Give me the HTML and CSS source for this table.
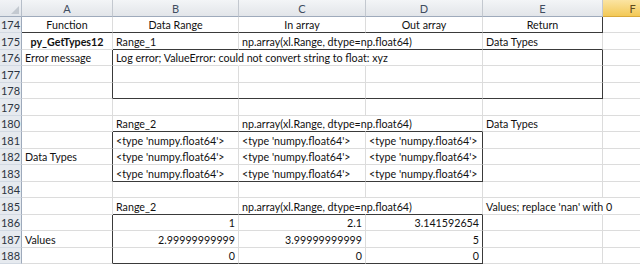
FILE: index.html
```html
<!DOCTYPE html>
<html>
<head>
<meta charset="utf-8">
<link rel="stylesheet" href="styles.css">
</head>
<body>
<div class="sheet">
  <div class="corner"></div>
  <div class="hd">A</div><div class="hd">B</div><div class="hd">C</div><div class="hd">D</div><div class="hd">E</div><div class="hd sel">F</div>

  <div class="rn">174</div>
  <div class="c ctr bb">Function</div><div class="c ctr bb">Data Range</div><div class="c ctr bb">In array</div><div class="c ctr bb">Out array</div><div class="c ctr bb br">Return</div><div class="c"></div>

  <div class="rn">175</div>
  <div class="c ctr b">py_GetTypes12</div><div class="c bb">Range_1</div><div class="c bb nr">np.array(xl.Range, dtype=np.float64)</div><div class="c bb"></div><div class="c bb">Data Types</div><div class="c"></div>

  <div class="rn">176</div>
  <div class="c br">Error message</div><div class="c nr">Log error; ValueError: could not convert string to float: xyz</div><div class="c nr"></div><div class="c"></div><div class="c br"></div><div class="c"></div>

  <div class="rn">177</div>
  <div class="c br"></div><div class="c"></div><div class="c"></div><div class="c"></div><div class="c br"></div><div class="c"></div>

  <div class="rn">178</div>
  <div class="c br"></div><div class="c bb"></div><div class="c bb"></div><div class="c bb"></div><div class="c bb br"></div><div class="c"></div>

  <div class="rn">179</div>
  <div class="c"></div><div class="c"></div><div class="c"></div><div class="c"></div><div class="c"></div><div class="c"></div>

  <div class="rn">180</div>
  <div class="c"></div><div class="c bb">Range_2</div><div class="c bb nr">np.array(xl.Range, dtype=np.float64)</div><div class="c bb"></div><div class="c">Data Types</div><div class="c"></div>

  <div class="rn">181</div>
  <div class="c br"></div><div class="c">&lt;type 'numpy.float64'&gt;</div><div class="c">&lt;type 'numpy.float64'&gt;</div><div class="c br">&lt;type 'numpy.float64'&gt;</div><div class="c"></div><div class="c"></div>

  <div class="rn">182</div>
  <div class="c br">Data Types</div><div class="c">&lt;type 'numpy.float64'&gt;</div><div class="c">&lt;type 'numpy.float64'&gt;</div><div class="c br">&lt;type 'numpy.float64'&gt;</div><div class="c"></div><div class="c"></div>

  <div class="rn">183</div>
  <div class="c br"></div><div class="c bb">&lt;type 'numpy.float64'&gt;</div><div class="c bb">&lt;type 'numpy.float64'&gt;</div><div class="c bb br">&lt;type 'numpy.float64'&gt;</div><div class="c"></div><div class="c"></div>

  <div class="rn">184</div>
  <div class="c"></div><div class="c"></div><div class="c"></div><div class="c"></div><div class="c"></div><div class="c"></div>

  <div class="rn">185</div>
  <div class="c"></div><div class="c bb">Range_2</div><div class="c bb nr">np.array(xl.Range, dtype=np.float64)</div><div class="c bb"></div><div class="c nr">Values; replace 'nan' with 0</div><div class="c"></div>

  <div class="rn">186</div>
  <div class="c br"></div><div class="c r">1</div><div class="c r">2.1</div><div class="c r br">3.141592654</div><div class="c"></div><div class="c"></div>

  <div class="rn">187</div>
  <div class="c br">Values</div><div class="c r">2.99999999999</div><div class="c r">3.99999999999</div><div class="c r br">5</div><div class="c"></div><div class="c"></div>

  <div class="rn">188</div>
  <div class="c br"></div><div class="c r bb">0</div><div class="c r bb">0</div><div class="c r bb br">0</div><div class="c"></div><div class="c"></div>
</div>
</body>
</html>
```
FILE: styles.css
```css
html, body {
  margin: 0;
  padding: 0;
  background: #ffffff;
}
body {
  width: 640px;
  height: 265px;
  overflow: hidden;
}
.sheet {
  display: grid;
  grid-template-columns: 22px 91px 126px 127px 117px 120px 60px;
  grid-template-rows: 17px 16px 17px 16px 17px 16px 17px 16px 17px 16px 17px 16px 17px 16px 17px 16px;
  font-family: "Lato", "Liberation Sans", sans-serif;
  font-size: 10.7px;
  color: #111;
}
.corner {
  position: relative;
  background: linear-gradient(#f1f3f6, #e1e5ea);
  border-right: 1px solid #b6bec9;
  border-bottom: 1px solid #9eaabb;
  box-sizing: border-box;
}
.corner::after {
  content: "";
  position: absolute;
  right: 2px;
  bottom: 2px;
  width: 0;
  height: 0;
  border-left: 8px solid transparent;
  border-bottom: 8px solid #c3c9d0;
}
.hd {
  display: flex;
  align-items: center;
  justify-content: center;
  background: linear-gradient(#f3f5f7, #e2e5e9);
  border-right: 1px solid #c3c8cf;
  border-bottom: 1px solid #9eaabb;
  box-sizing: border-box;
  color: #3f4d60;
  font-size: 11px;
}
.hd.sel {
  background: linear-gradient(#fbe4a2, #f3c957);
  border-bottom-color: #d9a93a;
  color: #5e4a1e;
}
.rn {
  display: flex;
  align-items: flex-end;
  justify-content: center;
  padding-bottom: 1px;
  background: #e6eaef;
  border-right: 1px solid #9eaabb;
  border-bottom: 1px solid #d2d9e2;
  box-sizing: border-box;
  color: #2c3440;
  font-size: 11px;
}
.c {
  display: flex;
  align-items: flex-end;
  padding: 0 3px 1px 3px;
  border-right: 1px solid #dcdcdc;
  border-bottom: 1px solid #dcdcdc;
  box-sizing: border-box;
  white-space: nowrap;
  min-width: 0;
  line-height: 13px;
}
.ctr { justify-content: center; }
.r { justify-content: flex-end; }
.b { font-weight: bold; }
.nr { border-right-color: transparent; }
.bb { border-bottom-color: #3a3a3a; }
.br { border-right-color: #3a3a3a; }
```
